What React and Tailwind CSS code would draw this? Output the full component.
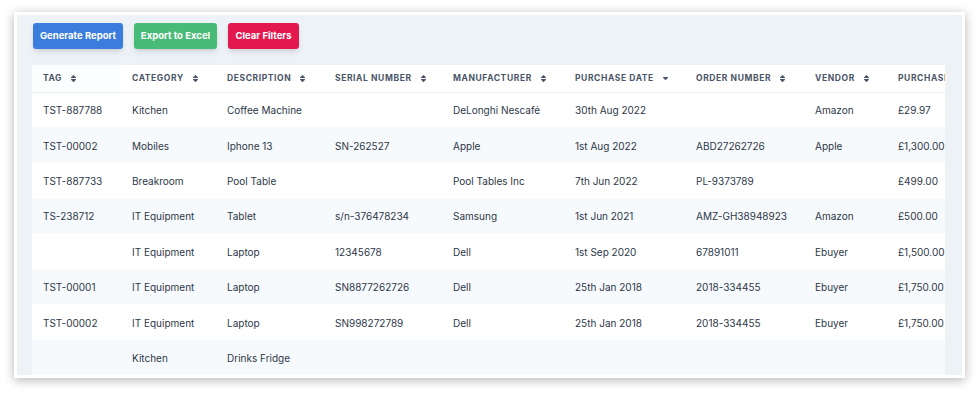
import React from "react";
import { FaSort, FaSortDown } from "react-icons/fa";

const columns = [
    { label: "Tag", w: "w-[89px]" },
    { label: "Category", w: "w-[95px]" },
    { label: "Description", w: "w-[108px]" },
    { label: "Serial Number", w: "w-[118px]" },
    { label: "Manufacturer", w: "w-[122px]" },
    { label: "Purchase Date", w: "w-[121px]", sorted: true },
    { label: "Order Number", w: "w-[119px]" },
    { label: "Vendor", w: "w-[83px]" },
    { label: "Purchase Price", w: "w-[110px]" },
];

const rows = [
    ["TST-887788", "Kitchen", "Coffee Machine", "", "DeLonghi Nescafé", "30th Aug 2022", "", "Amazon", "£29.97"],
    ["TST-00002", "Mobiles", "Iphone 13", "SN-262527", "Apple", "1st Aug 2022", "ABD27262726", "Apple", "£1,300.00"],
    ["TST-887733", "Breakroom", "Pool Table", "", "Pool Tables Inc", "7th Jun 2022", "PL-9373789", "", "£499.00"],
    ["TS-238712", "IT Equipment", "Tablet", "s/n-376478234", "Samsung", "1st Jun 2021", "AMZ-GH38948923", "Amazon", "£500.00"],
    ["", "IT Equipment", "Laptop", "12345678", "Dell", "1st Sep 2020", "67891011", "Ebuyer", "£1,500.00"],
    ["TST-00001", "IT Equipment", "Laptop", "SN8877262726", "Dell", "25th Jan 2018", "2018-334455", "Ebuyer", "£1,750.00"],
    ["TST-00002", "IT Equipment", "Laptop", "SN998272789", "Dell", "25th Jan 2018", "2018-334455", "Ebuyer", "£1,750.00"],
    ["", "Kitchen", "Drinks Fridge", "", "", "", "", "", ""],
];

const App = () => {
    return (
        <div className="w-[979px] h-[394px] bg-white pt-[12px] pl-[14px] font-['Inter',sans-serif] text-[#2d3748]">
            <div className="w-[951px] h-[366px] border-[3px] border-white bg-[#edf2f7] shadow-[0_2px_10px_rgba(0,0,0,0.3)] overflow-hidden">
                <div className="flex gap-[11px] pl-[16px] pt-[8px]">
                    <button className="w-[90px] h-[26px] rounded-[3px] bg-[#3b7ddd] text-white text-[9.5px] font-bold shadow-md">
                        Generate Report
                    </button>
                    <button className="w-[83px] h-[26px] rounded-[3px] bg-[#48bb78] text-white text-[9.5px] font-bold shadow-md">
                        Export to Excel
                    </button>
                    <button className="w-[71px] h-[26px] rounded-[3px] bg-[#e2184f] text-white text-[9.5px] font-bold shadow-md">
                        Clear Filters
                    </button>
                </div>

                <div className="mt-[16px] ml-[15px] w-[913px] overflow-hidden">
                    <table className="table-fixed border-collapse w-[965px]">
                        <thead>
                            <tr className="h-[27px] bg-white border-b border-[#edf2f7]">
                                {columns.map((col, i) => (
                                    <th key={col.label} className={`${col.w} pl-[11px] text-left ${i === 0 ? "bg-[#fcfdfe]" : ""}`}>
                                        <span className="flex items-center gap-[7px] whitespace-nowrap uppercase text-[8.5px] font-bold tracking-[0.07em] text-[#4a5568]">
                                            {col.label}
                                            {col.sorted ? (
                                                <FaSortDown className="text-[9px] text-[#4a5568] -mt-[4px]" />
                                            ) : (
                                                <FaSort className="text-[9px] text-[#4a5568]" />
                                            )}
                                        </span>
                                    </th>
                                ))}
                            </tr>
                        </thead>
                        <tbody>
                            {rows.map((row, r) => (
                                <tr key={r} className={`h-[35.4px] ${r % 2 === 0 ? "bg-white" : "bg-[#f7fafc]"}`}>
                                    {row.map((cell, c) => (
                                        <td key={c} className="pl-[11px] pt-[2px] text-[10px] whitespace-nowrap overflow-hidden">
                                            {cell}
                                        </td>
                                    ))}
                                </tr>
                            ))}
                        </tbody>
                    </table>
                </div>
            </div>
        </div>
    );
};

export default App;
